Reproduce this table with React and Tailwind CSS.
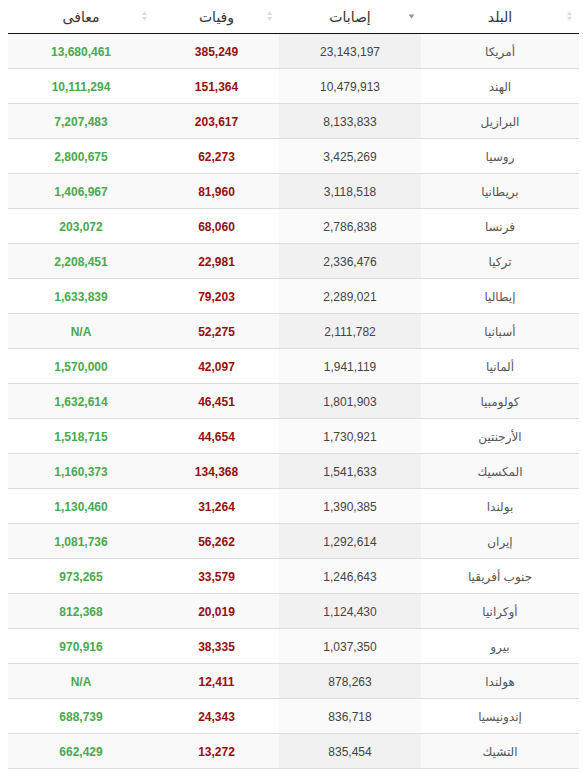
const ROWS = [
  ['أمريكا', '23,143,197', '385,249', '13,680,461'],
  ['الهند', '10,479,913', '151,364', '10,111,294'],
  ['البرازيل', '8,133,833', '203,617', '7,207,483'],
  ['روسيا', '3,425,269', '62,273', '2,800,675'],
  ['بريطانيا', '3,118,518', '81,960', '1,406,967'],
  ['فرنسا', '2,786,838', '68,060', '203,072'],
  ['تركيا', '2,336,476', '22,981', '2,208,451'],
  ['إيطاليا', '2,289,021', '79,203', '1,633,839'],
  ['أسبانيا', '2,111,782', '52,275', 'N/A'],
  ['ألمانيا', '1,941,119', '42,097', '1,570,000'],
  ['كولومبيا', '1,801,903', '46,451', '1,632,614'],
  ['الأرجنتين', '1,730,921', '44,654', '1,518,715'],
  ['المكسيك', '1,541,633', '134,368', '1,160,373'],
  ['بولندا', '1,390,385', '31,264', '1,130,460'],
  ['إيران', '1,292,614', '56,262', '1,081,736'],
  ['جنوب أفريقيا', '1,246,643', '33,579', '973,265'],
  ['أوكرانيا', '1,124,430', '20,019', '812,368'],
  ['بيرو', '1,037,350', '38,335', '970,916'],
  ['هولندا', '878,263', '12,411', 'N/A'],
  ['إندونيسيا', '836,718', '24,343', '688,739'],
  ['التشيك', '835,454', '13,272', '662,429'],
]

// faint up/down pair used by unsorted columns
function SortBoth() {
  return (
    <svg width="7" height="11" viewBox="0 0 7 11" className="absolute right-[6px] top-1/2 -translate-y-1/2">
      <path d="M3.5 1 L6 4.5 L1 4.5 Z" fill="#dcdcdc" />
      <path d="M3.5 10 L6 6.5 L1 6.5 Z" fill="#dcdcdc" />
    </svg>
  )
}

function SortDesc() {
  return (
    <svg width="7" height="11" viewBox="0 0 7 11" className="absolute right-[6px] top-1/2 -translate-y-1/2">
      <path d="M3.5 8 L6.5 4 L0.5 4 Z" fill="#8a97c2" />
    </svg>
  )
}

function HeadCell({ label, sorted }) {
  return (
    <th className="relative h-[33px] pt-[2px] border-b border-[#111] text-center font-normal text-[14px] text-[#333]">
      {label}
      {sorted ? <SortDesc /> : <SortBoth />}
    </th>
  )
}

export default function App() {
  return (
    <div className="w-[583px] h-[772px] bg-white pl-2 pr-1 font-['Liberation_Sans','DejaVu_Sans',sans-serif]">
      <table dir="rtl" className="w-[571px] table-fixed border-collapse">
        <colgroup>
          <col className="w-[158px]" />
          <col className="w-[142px]" />
          <col className="w-[125px]" />
          <col className="w-[146px]" />
        </colgroup>
        <thead>
          <tr>
            <HeadCell label="البلد" />
            <HeadCell label="إصابات" sorted />
            <HeadCell label="وفيات" />
            <HeadCell label="معافى" />
          </tr>
        </thead>
        <tbody>
          {ROWS.map(([country, cases, deaths, recovered], i) => {
            const odd = i % 2 === 0
            return (
              <tr key={country} className={odd ? 'bg-[#f9f9f9]' : 'bg-white'}>
                <td className="h-[35px] pt-[2px] border-b border-[#ddd] text-center text-[12px] text-[#555]">{country}</td>
                <td className={`h-[35px] pt-[2px] border-b border-[#ddd] text-center text-[12px] text-[#444] ${odd ? 'bg-[#f1f1f1]' : 'bg-[#fafafa]'}`}>{cases}</td>
                <td className="h-[35px] pt-[2px] border-b border-[#ddd] text-center text-[12px] font-bold text-[#960f0f]">{deaths}</td>
                <td className="h-[35px] pt-[2px] border-b border-[#ddd] text-center text-[12px] font-bold text-[#4aa84e]">{recovered}</td>
              </tr>
            )
          })}
        </tbody>
      </table>
    </div>
  )
}
